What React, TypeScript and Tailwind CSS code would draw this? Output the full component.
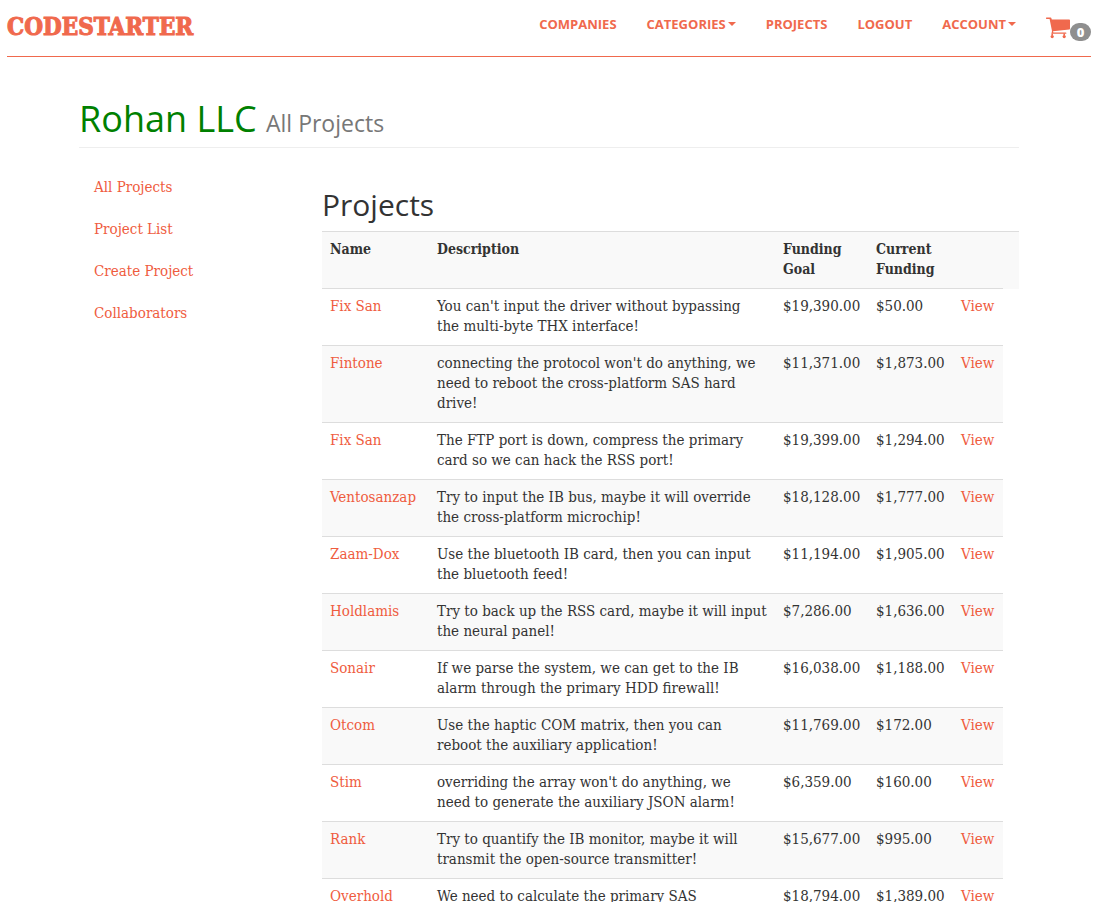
import React from "react";

type Project = {
  name: string;
  description: string;
  goal: string;
  current: string;
};

const projects: Project[] = [
  { name: "Fix San", description: "You can't input the driver without bypassing\nthe multi-byte THX interface!", goal: "$19,390.00", current: "$50.00" },
  { name: "Fintone", description: "connecting the protocol won't do anything, we\nneed to reboot the cross-platform SAS hard\ndrive!", goal: "$11,371.00", current: "$1,873.00" },
  { name: "Fix San", description: "The FTP port is down, compress the primary\ncard so we can hack the RSS port!", goal: "$19,399.00", current: "$1,294.00" },
  { name: "Ventosanzap", description: "Try to input the IB bus, maybe it will override\nthe cross-platform microchip!", goal: "$18,128.00", current: "$1,777.00" },
  { name: "Zaam-Dox", description: "Use the bluetooth IB card, then you can input\nthe bluetooth feed!", goal: "$11,194.00", current: "$1,905.00" },
  { name: "Holdlamis", description: "Try to back up the RSS card, maybe it will input\nthe neural panel!", goal: "$7,286.00", current: "$1,636.00" },
  { name: "Sonair", description: "If we parse the system, we can get to the IB\nalarm through the primary HDD firewall!", goal: "$16,038.00", current: "$1,188.00" },
  { name: "Otcom", description: "Use the haptic COM matrix, then you can\nreboot the auxiliary application!", goal: "$11,769.00", current: "$172.00" },
  { name: "Stim", description: "overriding the array won't do anything, we\nneed to generate the auxiliary JSON alarm!", goal: "$6,359.00", current: "$160.00" },
  { name: "Rank", description: "Try to quantify the IB monitor, maybe it will\ntransmit the open-source transmitter!", goal: "$15,677.00", current: "$995.00" },
  { name: "Overhold", description: "We need to calculate the primary SAS", goal: "$18,794.00", current: "$1,389.00" },
];

const sideLinks = ["All Projects", "Project List", "Create Project", "Collaborators"];

function Caret() {
  return (
    <svg viewBox="0 0 8 4" className="h-1 w-2" fill="currentColor" aria-hidden="true">
      <path d="M0 0h8L4 4z" />
    </svg>
  );
}

function Cart() {
  return (
    <svg viewBox="0 0 24 22" className="h-[22px] w-6" fill="currentColor" aria-hidden="true">
      <path d="M.4 .6H4.6Q5.2 .6 5.4 1.2L5.8 2.4H23.2Q24 2.4 24 3.2V11.6Q24 12.4 23.2 12.5L7 14.2 7.4 15.6H19.8Q20.4 15.6 20.4 16.2T19.8 16.8H6.2Q5.6 16.8 5.5 16.2L6 14 3.6 2H.4Q0 2 0 1.3T.4 .6z" />
      <path d="M5.4 16.4h1.6v2H5.4zM17.4 16.4h1.6v2h-1.6z" />
      <circle cx="6.2" cy="19.6" r="1.6" />
      <circle cx="18.2" cy="19.6" r="1.6" />
    </svg>
  );
}

function NavItem({ label, menu }: { label: string; menu?: boolean }) {
  if (menu) {
    return (
      <button type="button" className="flex items-center gap-0.5 uppercase">
        {label}
        <Caret />
      </button>
    );
  }
  return <a href="#" className="uppercase">{label}</a>;
}

export default function App() {
  return (
    <div className="bg-white pl-[7px] pr-2.5 font-['DejaVu_Serif_Condensed','DejaVu_Serif',serif] text-[15px] leading-5 text-[#333333]">
      <header className="flex h-[57px] items-start justify-between border-b border-[#f0694d] text-[#f0694d]">
        <a href="#" className="pt-[13px] text-2xl leading-7 font-bold [-webkit-text-stroke:1px_currentColor]">CODESTARTER</a>
        <nav className="flex items-start gap-[30px] pt-3.5 font-['Open_Sans',sans-serif] text-[13px] leading-5 font-bold">
          <NavItem label="Companies" />
          <NavItem label="Categories" menu />
          <NavItem label="Projects" />
          <NavItem label="Logout" />
          <NavItem label="Account" menu />
          <a href="#" aria-label="Cart" className="flex items-end pt-[3px]">
            <Cart />
            <span className="-mb-0.5 w-[21px] rounded-full bg-[#8f8f8f] text-center text-[13px] leading-[18px] font-extrabold text-white">0</span>
          </a>
        </nav>
      </header>

      <main className="mx-auto max-w-[940px]">
        <h1 className="mt-[41px] border-b border-[#eeeeee] pb-[7px] font-['Open_Sans',sans-serif] text-4xl leading-[42px] text-[#008000]">
          Rohan LLC <small className="text-[23px] leading-8 text-[#777777]">All Projects</small>
        </h1>

        <div className="grid grid-cols-[243px_1fr]">
          <ul className="mt-[19px] flex flex-col gap-0.5">
            {sideLinks.map((link) => (
              <li key={link}>
                <a href="#" className="block px-[15px] py-2.5 text-[#ef5c3e]">{link}</a>
              </li>
            ))}
          </ul>

          <section>
            <h2 className="mt-10 mb-2.5 font-['Open_Sans',sans-serif] text-3xl leading-[33px]">Projects</h2>
            <table className="w-full table-fixed border-collapse text-left [&_td]:border-t [&_td]:border-[#dddddd] [&_td]:px-2 [&_td]:pt-[7px] [&_td]:pb-[9px] [&_td]:align-top [&_th]:border-t [&_th]:border-[#dddddd] [&_th]:bg-[#f9f9f9] [&_th]:px-2 [&_th]:pt-[7px] [&_th]:pb-[9px] [&_th]:align-top">
              <colgroup>
                <col className="w-[107px]" />
                <col />
                <col className="w-[93px]" />
                <col className="w-[85px]" />
                <col className="w-[50px]" />
                <col className="w-4" />
              </colgroup>
              <thead className="text-sm leading-5">
                <tr>
                  <th>Name</th>
                  <th>Description</th>
                  <th>Funding Goal</th>
                  <th>Current Funding</th>
                  <th colSpan={2}></th>
                </tr>
              </thead>
              <tbody>
                {projects.map((p) => (
                  <tr key={p.name + p.goal} className="even:[&_td]:bg-[#f9f9f9]">
                    <td><a href="#" className="text-[#ef5c3e]">{p.name}</a></td>
                    <td className="whitespace-pre">{p.description}</td>
                    <td>{p.goal}</td>
                    <td>{p.current}</td>
                    <td><a href="#" className="text-[#ef5c3e]">View</a></td>
                  </tr>
                ))}
              </tbody>
            </table>
          </section>
        </div>
      </main>
    </div>
  );
}
